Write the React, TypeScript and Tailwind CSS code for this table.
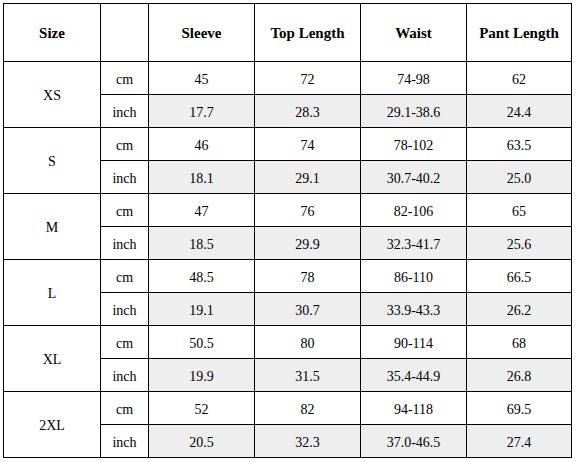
import React from "react";

const sizes = [
  { s: "XS", cm: ["45", "72", "74-98", "62"], inch: ["17.7", "28.3", "29.1-38.6", "24.4"] },
  { s: "S", cm: ["46", "74", "78-102", "63.5"], inch: ["18.1", "29.1", "30.7-40.2", "25.0"] },
  { s: "M", cm: ["47", "76", "82-106", "65"], inch: ["18.5", "29.9", "32.3-41.7", "25.6"] },
  { s: "L", cm: ["48.5", "78", "86-110", "66.5"], inch: ["19.1", "30.7", "33.9-43.3", "26.2"] },
  { s: "XL", cm: ["50.5", "80", "90-114", "68"], inch: ["19.9", "31.5", "35.4-44.9", "26.8"] },
  { s: "2XL", cm: ["52", "82", "94-118", "69.5"], inch: ["20.5", "32.3", "37.0-46.5", "27.4"] },
];

const dataW = ["w-[105px]", "w-[105px]", "w-[105px]", "w-[104px]"];
const headers = ["Sleeve", "Top Length", "Waist", "Pant Length"];

const cell = "flex items-center justify-center pt-[2px]";

function SubRow({ unit, values, gray }: { unit: string; values: string[]; gray: boolean }) {
  return (
    <div className="flex gap-px h-[32px]">
      <div className={`${cell} w-[47px] bg-white`}>{unit}</div>
      {values.map((v, i) => (
        <div key={i} className={`${cell} ${dataW[i]} ${gray ? "bg-[#eeeeee]" : "bg-white"}`}>
          {v}
        </div>
      ))}
    </div>
  );
}

export default function App() {
  return (
    <div className="bg-white w-[577px] h-[462px] pt-[3px] pl-[3px] font-['Liberation_Serif','Times_New_Roman',serif] text-black text-[14px]">
      <div className="w-fit bg-black p-px flex flex-col gap-px">
        <div className="flex gap-px h-[57px] font-bold text-[15px]">
          <div className={`${cell} w-[96px] bg-white`}>Size</div>
          <div className={`${cell} w-[47px] bg-white`}></div>
          {headers.map((h, i) => (
            <div key={h} className={`${cell} ${dataW[i]} bg-white`}>
              {h}
            </div>
          ))}
        </div>
        {sizes.map((row) => (
          <div key={row.s} className="flex gap-px">
            <div className={`${cell} w-[96px] bg-white`}>{row.s}</div>
            <div className="flex flex-col gap-px">
              <SubRow unit="cm" values={row.cm} gray={false} />
              <SubRow unit="inch" values={row.inch} gray={true} />
            </div>
          </div>
        ))}
      </div>
    </div>
  );
}
